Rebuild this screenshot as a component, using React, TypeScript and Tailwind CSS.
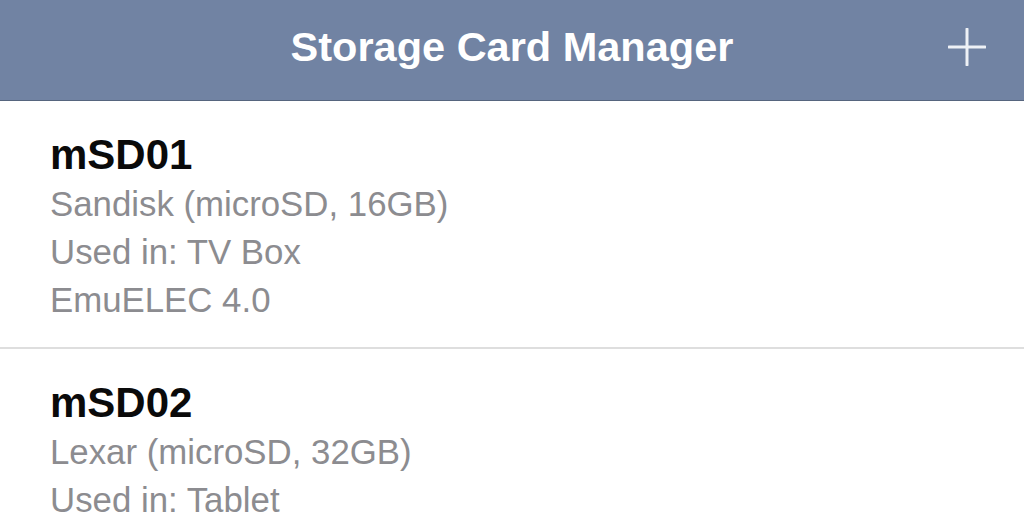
import React from "react";

type Card = {
  id: string;
  brand: string;
  usedIn: string;
  note?: string;
};

const cards: Card[] = [
  { id: "mSD01", brand: "Sandisk (microSD, 16GB)", usedIn: "TV Box", note: "EmuELEC 4.0" },
  { id: "mSD02", brand: "Lexar (microSD, 32GB)", usedIn: "Tablet", note: "Android 9" },
];

function PlusIcon() {
  return (
    <svg width="38" height="38" viewBox="0 0 38 38" fill="none">
      <path d="M19 1v36M1 19h36" stroke="#eef1f6" strokeWidth="3" strokeLinecap="round" />
    </svg>
  );
}

function CardRow({ card }: { card: Card }) {
  return (
    <div className="border-b-2 border-[#dedede] pl-[50px] pt-[29px] pb-[23px]">
      <div className="text-[42px] leading-[50px] font-bold text-[#0a0a0a]">{card.id}</div>
      <div className="text-[34.8px] leading-[48px] text-[#8c8c90]">{card.brand}</div>
      <div className="text-[34.8px] leading-[48px] text-[#8c8c90]">Used in: {card.usedIn}</div>
      {card.note && <div className="text-[34.8px] leading-[48px] text-[#8c8c90]">{card.note}</div>}
    </div>
  );
}

export default function App() {
  return (
    <div
      className="w-[1024px] h-[512px] overflow-hidden bg-white flex flex-col"
      style={{ fontFamily: '"Liberation Sans", Arial, sans-serif' }}
    >
      <header className="h-[101px] shrink-0 bg-[#7183a3] border-b border-[#56657e] flex items-center relative">
        <h1 className="flex-1 text-center text-white text-[41.5px] font-bold pb-[5px]">Storage Card Manager</h1>
        <button className="absolute right-[38px] top-[28px]">
          <PlusIcon />
        </button>
      </header>
      <div className="flex flex-col">
        {cards.map((c) => (
          <CardRow key={c.id} card={c} />
        ))}
      </div>
    </div>
  );
}
